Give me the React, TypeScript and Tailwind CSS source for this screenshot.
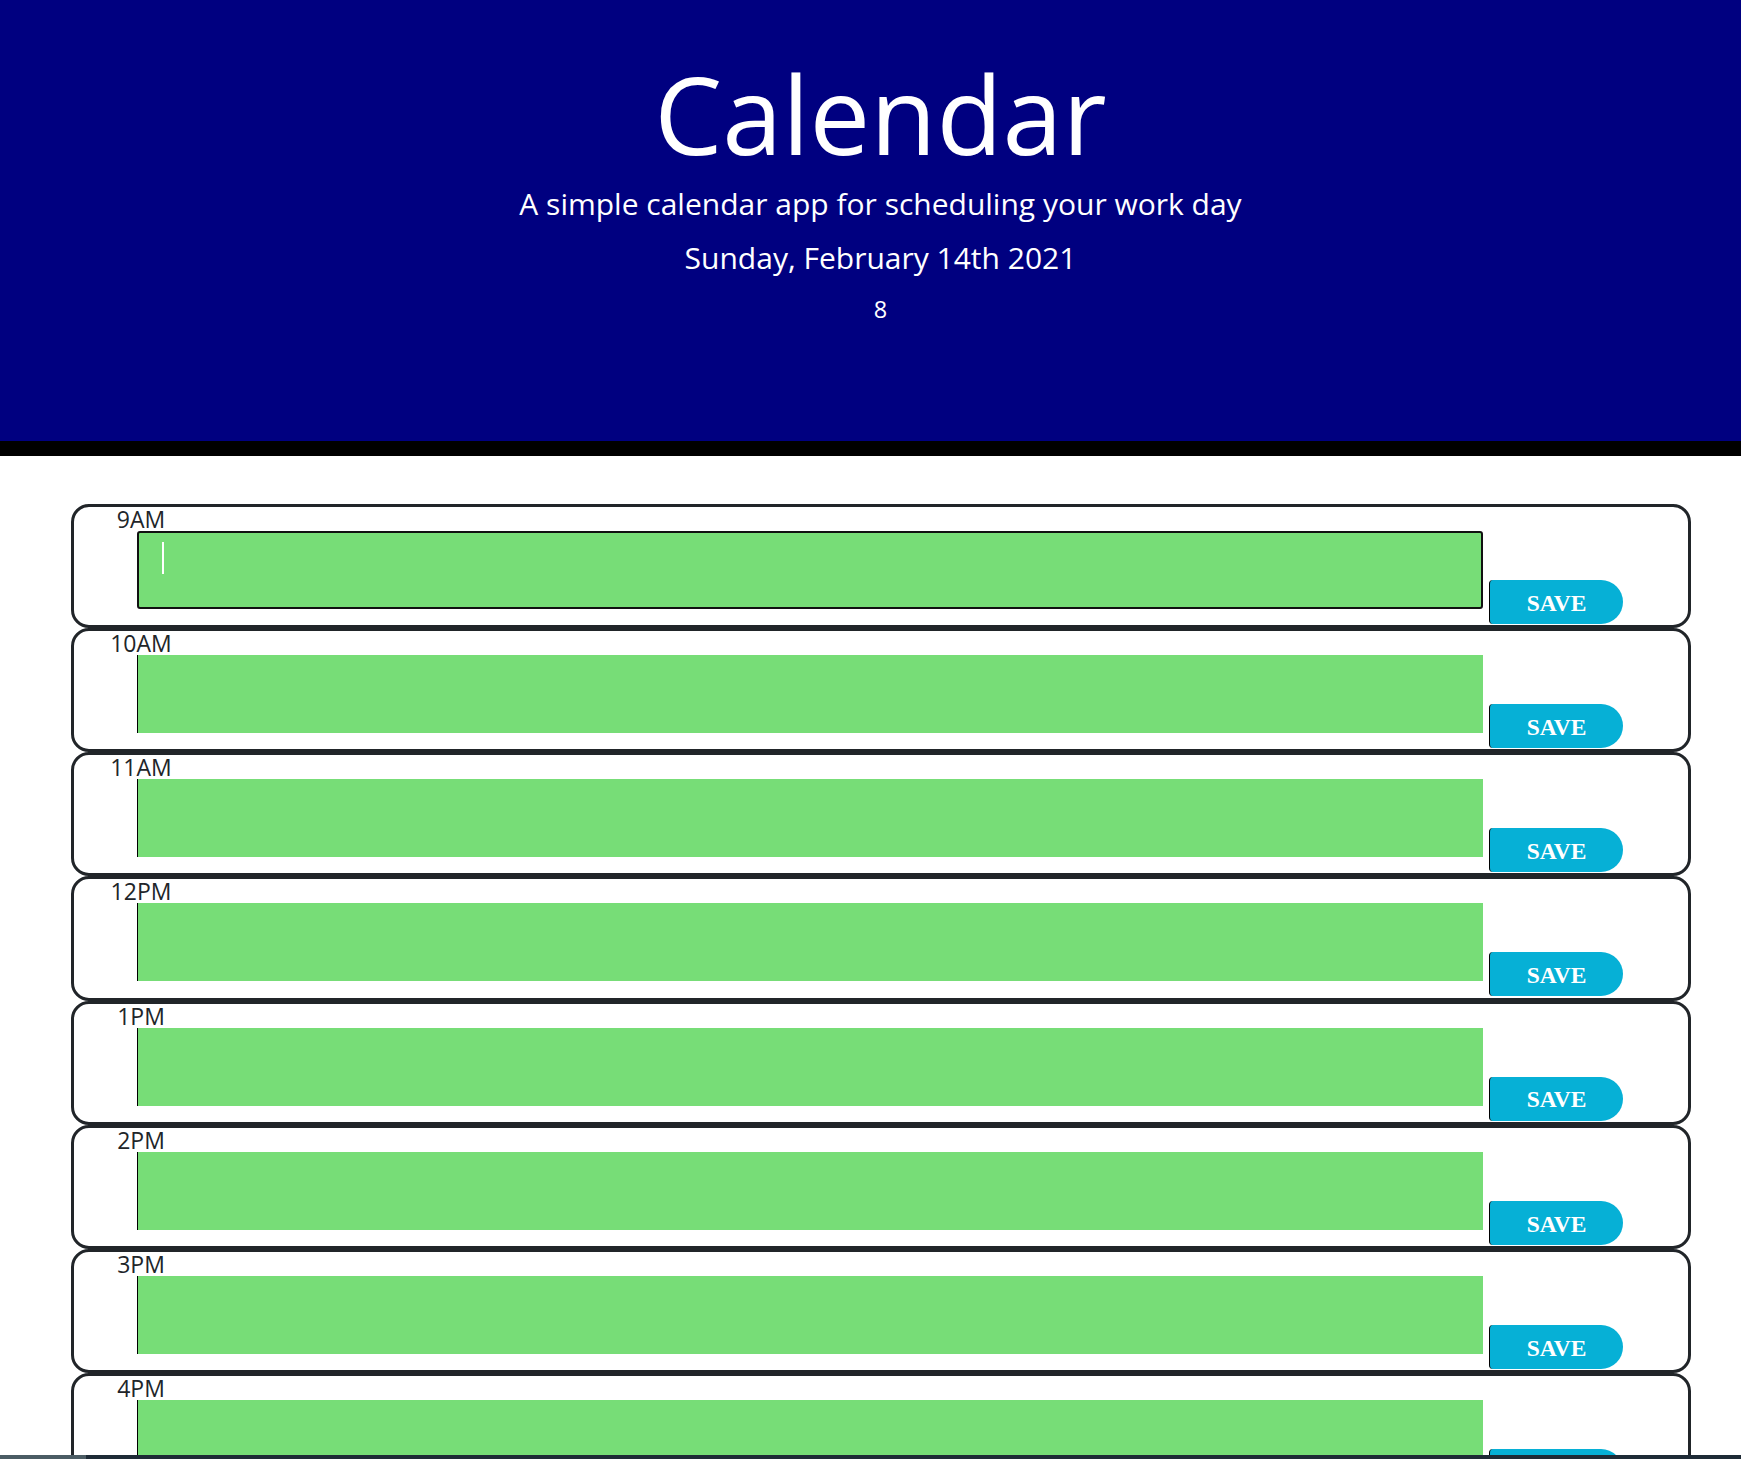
const hours = ["9AM", "10AM", "11AM", "12PM", "1PM", "2PM", "3PM", "4PM", "5PM"];

function HourRow({ hour, active }: { hour: string; active: boolean }) {
  return (
    <div className="flex h-[124.15px] w-[1620px] flex-col rounded-[18px] border-[3px] border-[#212529] bg-white">
      <div className="h-[24px] w-[134px] text-center text-[23px] leading-[24px] text-[#212529]">
        {hour}
      </div>
      <div className="flex flex-1 items-start">
        {active ? (
          <div className="relative ml-[63px] h-[78px] w-[1346px] rounded-[3px] border-2 border-[#111] bg-[#77dd77]">
            <span className="absolute left-[23px] top-[9px] h-[32px] w-[2px] bg-white" />
          </div>
        ) : (
          <div className="ml-[63px] h-[78px] w-[1346px] border-l border-black bg-[#77dd77]" />
        )}
        <button className="ml-[6px] mt-[49px] h-[44px] w-[134px] rounded-l-[4px] rounded-r-[22px] border-l border-black bg-[#06b0d6] pt-[3px] font-['Liberation_Serif',serif] text-[23.5px] font-bold text-white">
          SAVE
        </button>
      </div>
    </div>
  );
}

export default function App() {
  return (
    <div className="h-[1459px] overflow-hidden bg-white font-['Open_Sans',sans-serif]">
      <header className="flex h-[456px] flex-col items-center border-b-[15px] border-black bg-[#000080] pl-[20px] pt-[50px] text-white">
        <h1 className="text-[108px] font-normal leading-[127px]">Calendar</h1>
        <p className="mt-[7px] text-[30px] leading-[40px]">
          A simple calendar app for scheduling your work day
        </p>
        <p className="mt-[14px] text-[30px] leading-[40px]">Sunday, February 14th 2021</p>
        <p className="mt-[15px] text-[23.5px] leading-[32px]">8</p>
      </header>

      <main className="ml-[71px] mt-[48px] flex flex-col">
        {hours.map((hour, i) => (
          <HourRow key={hour} hour={hour} active={i === 0} />
        ))}
      </main>

      <div className="fixed bottom-0 left-0 right-0 flex h-[4px] bg-[#1e2b36]">
        <div className="w-[86px] bg-[#4b5c64]" />
      </div>
    </div>
  );
}
